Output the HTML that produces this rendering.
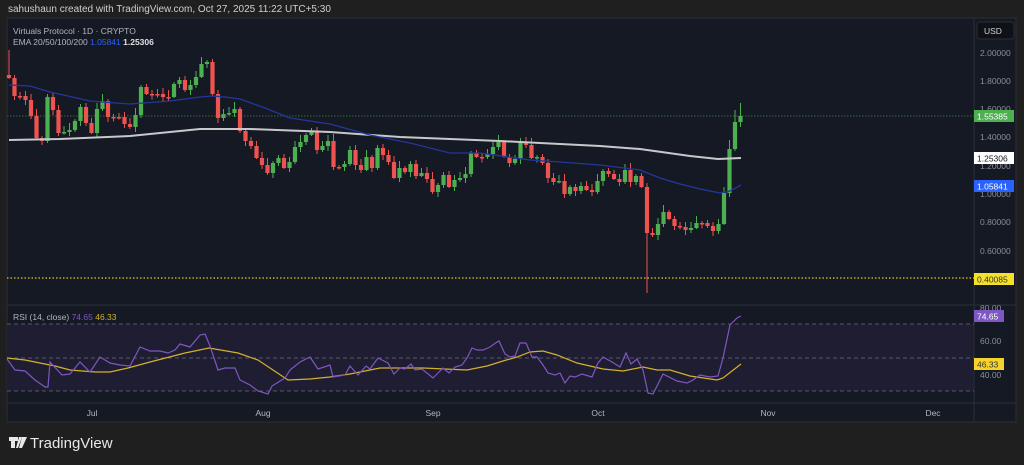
<!DOCTYPE html>
<html><head><meta charset="utf-8"><style>
html,body{margin:0;padding:0;background:#1f1f1f;width:1024px;height:465px;overflow:hidden;font-family:"Liberation Sans",sans-serif}
svg{position:absolute;left:0;top:0}
</style></head><body>
<svg id="s" width="1024" height="465" xmlns="http://www.w3.org/2000/svg">
<rect x="0" y="0" width="1024" height="465" fill="#1f1f1f"/>
<text x="8" y="12" fill="#cfcfcf" font-size="10">sahushaun created with TradingView.com, Oct 27, 2025 11:22 UTC+5:30</text>
<rect x="7" y="18" width="1009" height="404" fill="#151924" stroke="#2a2e39" stroke-width="1"/>
<rect x="7" y="324" width="967" height="67" fill="#1f1d31"/>
<line x1="7" y1="305" x2="1016" y2="305" stroke="#2a2e39"/>
<line x1="7" y1="403" x2="1016" y2="403" stroke="#2a2e39"/>
<line x1="974" y1="18" x2="974" y2="422" stroke="#2a2e39"/>
<line x1="7" y1="324" x2="974" y2="324" stroke="#6a6d78" stroke-dasharray="4,3" stroke-width="0.8"/>
<line x1="7" y1="358" x2="974" y2="358" stroke="#6a6d78" stroke-dasharray="4,3" stroke-width="0.8"/>
<line x1="7" y1="391" x2="974" y2="391" stroke="#6a6d78" stroke-dasharray="4,3" stroke-width="0.8"/>
<line x1="7" y1="116" x2="974" y2="116" stroke="#2f6b3a" stroke-dasharray="1.5,1.5" stroke-width="1"/>
<line x1="7" y1="278" x2="974" y2="278" stroke="#e6c81e" stroke-dasharray="1.5,2" stroke-width="1.2"/>
<g id="c"></g>
<polyline fill="none" stroke="#c8c8cc" stroke-width="2" points="9,140 60,139 130,136 200,129 250,129 330,132 400,137 500,141 560,144 600,146 640,149 690,156 718,159 741,158"/>
<polyline fill="none" stroke="#23379a" stroke-width="1.3" points="9,85 30,86 50,92 90,101 130,104 170,101 200,97 212,96 225,97 240,99 265,108 290,118 330,124 370,135 410,143 450,153 480,153 530,160 560,162 600,165 640,170 660,178 680,184 700,189 720,193 730,191 741,185"/>
<polyline fill="none" stroke="#d4b12a" stroke-width="1.2" points="7,358 25,360 55,366 70,370 95,372 110,372 128,368 150,362 185,353 209,348 238,353 258,360 288,380 310,379 330,377 350,374 380,368 423,368 467,370 487,366 503,361 517,357 530,352 543,351 557,355 577,363 603,369 623,371 643,367 657,370 670,370 690,376 717,380 723,378 741,364"/>
<polyline fill="none" stroke="#7e57c2" stroke-width="1.2" points="7,359 15,370 25,371 35,380 45,387 48,387 50,362 62,375 70,374 80,362 90,372 100,357 110,363 120,365 130,366 140,347 150,351 160,351 168,353 175,350 180,344 190,347 200,335 205,334 210,346 218,370 225,368 235,368 240,380 250,385 258,391 268,394 272,386 285,378 290,370 300,362 310,357 318,369 330,365 333,377 345,375 350,366 358,375 366,366 370,369 378,358 388,363 394,374 400,368 405,369 411,364 415,370 422,369 433,378 443,368 449,373 455,367 462,365 467,358 472,348 477,350 483,350 490,347 497,342 499,341 505,354 510,357 515,356 520,343 526,343 532,357 537,357 543,365 548,373 555,375 560,373 565,383 570,376 575,377 582,374 592,377 598,363 603,357 612,362 620,367 626,353 631,364 637,359 643,370 648,393 653,394 663,374 677,381 687,383 693,380 700,375 710,377 718,376 723,358 730,325 737,318 741,316"/>
<text x="13" y="34" fill="#b2b5be" font-size="8.5">Virtuals Protocol · 1D · CRYPTO</text>
<text x="13" y="45" fill="#b2b5be" font-size="8.5">EMA 20/50/100/200 <tspan fill="#2962ff">1.05841</tspan> <tspan fill="#e0e0e0" font-weight="bold">1.25306</tspan></text>
<text x="13" y="320" fill="#b2b5be" font-size="8.5">RSI (14, close) <tspan fill="#7e57c2">74.65</tspan> <tspan fill="#d4b12a">46.33</tspan></text>
<rect x="977" y="22" width="37" height="17" rx="3" fill="#0f1117" stroke="#2a2e39"/>
<text x="984" y="34" fill="#d1d4dc" font-size="8.5">USD</text>
<g fill="#8a8d96" font-size="8.5">
<text x="980" y="56">2.00000</text><text x="980" y="84">1.80000</text><text x="980" y="112">1.60000</text><text x="980" y="140">1.40000</text><text x="980" y="169">1.20000</text><text x="980" y="197">1.00000</text><text x="980" y="225">0.80000</text><text x="980" y="254">0.60000</text><text x="980" y="311">80.00</text><text x="980" y="344">60.00</text><text x="980" y="378">40.00</text>
</g>
<rect x="974" y="110" width="40" height="12" fill="#4caf50"/><text x="977" y="119.5" fill="#fff" font-size="8.5">1.55385</text>
<rect x="974" y="152" width="40" height="12" fill="#ffffff"/><text x="977" y="161.5" fill="#131722" font-size="8.5">1.25306</text>
<rect x="974" y="180" width="40" height="12" fill="#2962ff"/><text x="977" y="189.5" fill="#fff" font-size="8.5">1.05841</text>
<rect x="974" y="273" width="40" height="12" fill="#f5e12a"/><text x="977" y="282.5" fill="#333" font-size="8.5">0.40085</text>
<rect x="974" y="310" width="30" height="12" fill="#7e57c2"/><text x="977" y="319.5" fill="#fff" font-size="8.5">74.65</text>
<rect x="974" y="358" width="30" height="12" fill="#f5d32a"/><text x="977" y="367.5" fill="#333" font-size="8.5">46.33</text>
<g fill="#b2b5be" font-size="8.5" text-anchor="middle">
<text x="92" y="416">Jul</text><text x="263" y="416">Aug</text><text x="433" y="416">Sep</text><text x="598" y="416">Oct</text><text x="768" y="416">Nov</text><text x="933" y="416">Dec</text>
</g>
<g fill="#e8e8e8"><path d="M9 437h9v4h-3v7h-4v-7h-2z"/><path d="M19 437l3 0 -4 11h-2z"/><path d="M22 437h5l-5 11h-3z"/></g>
<text x="30" y="448" fill="#e8e8e8" font-size="15">TradingView</text>
</svg>
<script>
var cl=[78,96,96,100,116,138,141,97,110,133,132,130,121,107,123,133,109,101,117,117,117,124,127,115,87,94,94,94,97,97,84,80,90,85,77,64,62,94,118,114,113,109,131,141,146,158,165,173,163,158,168,162,147,142,135,131,150,146,141,167,167,164,150,165,170,157,168,148,
155,162,178,168,172,164,176,173,179,192,185,175,187,180,178,174,153,157,157,154,147,142,157,163,159,143,145,158,157,163,178,182,181,194,187,191,186,190,192,181,171,174,179,182,170,182,176,187,233,235,224,212,219,226,227,230,228,223,223,226,231,224,193,149,122,116];
var g=document.getElementById('c'),h='',o=75;
for(var i=0;i<cl.length;i++){var c=cl[i],x=9+i*5.5,up=c<o,col=up?'#4caf50':'#ef5350';
var t=Math.min(o,c),b=Math.max(o,c);if(b-t<1.5){b=t+1.5;}
var hi=t-(2+(i*7)%6),lo=b+(1+(i*3)%5);
if(i==0)hi=50;if(i==116)lo=293;if(i==133)hi=103;if(i==132)hi=110;if(i==131)hi=140;
h+='<line x1="'+x+'" x2="'+x+'" y1="'+hi+'" y2="'+lo+'" stroke="'+col+'" stroke-width="1"/>';
h+='<rect x="'+(x-2.1)+'" y="'+t+'" width="4.2" height="'+(b-t)+'" fill="'+col+'"/>';o=c;}
g.innerHTML=h;
</script>
</body></html>
